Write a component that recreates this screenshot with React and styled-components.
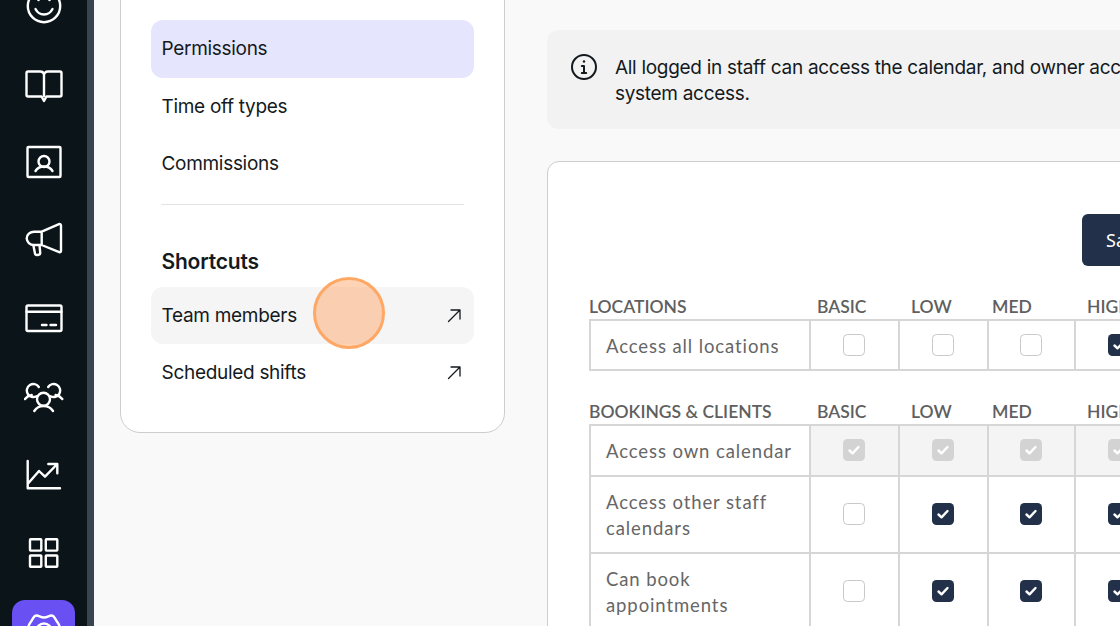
import React from "react";
import styled, { createGlobalStyle } from "styled-components";

const Global = createGlobalStyle`
  html, body { margin: 0; padding: 0; background: #f9f9f9; }
  #root { width: 1120px; height: 626px; overflow: hidden; }
  * { box-sizing: border-box; }
`;

const Page = styled.div`
  position: relative;
  display: flex;
  width: 1120px;
  height: 626px;
  overflow: hidden;
  background: #f9f9f9;
  font-family: Inter, "Liberation Sans", sans-serif;
`;
const Sidebar = styled.nav`
  flex: 0 0 87px;
  display: flex;
  flex-direction: column;
  margin-top: -33px;
  background: #0b1519;
`;
const Rail = styled.div`
  flex: 0 0 7px;
  background: #3a4450;
`;
const NavSlot = styled.div`
  flex: 0 0 78px;
  display: flex;
  align-items: center;
  justify-content: center;
`;
const ActiveNav = styled.div`
  width: 63px;
  height: 60px;
  border-radius: 13px;
  background: #6950f3;
  display: flex;
  align-items: center;
  justify-content: center;
`;
const Content = styled.main`
  flex: 1;
  min-width: 0;
  display: flex;
  align-items: flex-start;
  gap: 42px;
  padding-left: 26px;
`;
const Panel = styled.aside`
  flex: 0 0 385px;
  margin-top: -41px;
  padding: 60px 30px 30px;
  background: #fff;
  border: 1px solid #cdcdcd;
  border-radius: 20px;
  display: flex;
  flex-direction: column;
`;
const MenuItem = styled.div`
  height: 57.5px;
  padding: 0 12.5px 0 10.5px;
  border-radius: 12px;
  display: flex;
  align-items: center;
  justify-content: space-between;
  font-size: 19px;
  letter-spacing: -0.3px;
  color: #14191d;
  background: ${(p) => (p.$state === "active" ? "#e5e6fd" : p.$state === "hover" ? "#f5f5f5" : "transparent")};
`;
const Divider = styled.hr`
  margin: 11px 10px 0;
  border: 0;
  border-top: 1.5px solid #e4e4e4;
`;
const PanelHeading = styled.h3`
  margin: 43px 10.5px 11px;
  font-size: 21px;
  line-height: 28px;
  font-weight: 600;
  letter-spacing: -0.2px;
  color: #14191d;
`;
const Column = styled.section`
  flex: 0 0 760px;
  display: flex;
  flex-direction: column;
  gap: 32px;
  padding-top: 30px;
`;
const Banner = styled.div`
  height: 99px;
  padding: 24px 23px 0;
  border-radius: 12px;
  background: #f2f2f2;
  display: flex;
  gap: 17px;
`;
const BannerIcon = styled.svg`
  flex: none;
  margin-top: -1px;
`;
const BannerText = styled.p`
  margin: 1px 0 0;
  width: 650px;
  font-size: 19px;
  line-height: 26px;
  letter-spacing: -0.3px;
  color: #14191d;
`;
const Card = styled.div`
  padding: 52px 0 0 41px;
  background: #fff;
  border: 1px solid #cdcdcd;
  border-radius: 12px;
  height: 700px;
  display: flex;
  flex-direction: column;
`;
const SaveRow = styled.div`
  display: flex;
  padding-left: 493px;
  margin-bottom: 27px;
`;
const SaveButton = styled.button`
  width: 120px;
  height: 52px;
  border: 0;
  border-radius: 6px;
  background: #223049;
  color: #fff;
  text-align: left;
  padding-left: 24px;
  font-family: "Noto Sans", sans-serif;
  font-size: 18px;
`;
const TableBlock = styled.div`
  margin-bottom: 27px;
`;
const GRID = "222px 89px 88.5px 87.5px 88px";
const HeaderRow = styled.div`
  display: grid;
  grid-template-columns: ${GRID};
  height: 28px;
  line-height: 27px;
  font-family: Lato, sans-serif;
  font-weight: 600;
  font-size: 17.5px;
  color: #5f5f5f;
`;
const HeaderCell = styled.div`
  padding-left: ${(p) => p.$pad}px;
  white-space: nowrap;
`;
const Row = styled.div`
  display: grid;
  grid-template-columns: ${GRID};
  height: ${(p) => p.$h}px;
  margin-top: -2px;
`;
const LabelCell = styled.div`
  border: 2px solid #d6d6d6;
  padding: 1px 8px 0 15px;
  display: flex;
  align-items: center;
  font-family: Lato, sans-serif;
  font-size: 18.5px;
  line-height: 26px;
  letter-spacing: 0.9px;
  color: #666;
`;
const CheckCell = styled.div`
  border: 2px solid #d6d6d6;
  border-left: 0;
  padding-right: 1px;
  display: flex;
  align-items: center;
  justify-content: center;
  background: ${(p) => (p.$disabled ? "#f4f4f4" : "#fff")};
`;
const Box = styled.span`
  width: 22px;
  height: 22px;
  border-radius: 4.5px;
  display: flex;
  align-items: center;
  justify-content: center;
  border: ${(p) => (p.$v === 0 ? "1.5px solid #c9c9c9" : "0")};
  background: ${(p) => (p.$v === 1 ? "#223049" : p.$v === 2 ? "#d3d3d3" : "#fff")};
`;
const Pointer = styled.div`
  position: absolute;
  left: 313px;
  top: 277px;
  width: 72px;
  height: 72px;
  border-radius: 50%;
  background: rgba(255, 170, 110, 0.5);
  border: 3px solid #ffa764;
`;

const Ico = ({ children }) => (
  <svg width="40" height="40" viewBox="0 0 40 40" fill="none" stroke="#fff" strokeWidth="2.4" strokeLinecap="round" strokeLinejoin="round">
    {children}
  </svg>
);
const icons = [
  <Ico key="a"><circle cx="20" cy="20" r="16.2" /><path d="M11.5 23c2 4 5 5.5 8.5 5.5s6.500-1.500 8.500-5.500" /><circle cx="14.500" cy="14" r="1.300" fill="#fff" stroke="none" /><circle cx="25.500" cy="14" r="1.300" fill="#fff" stroke="none" /></Ico>,
  <Ico key="b"><g transform="translate(0 2)"><path d="M20 10v20M20 35l-2.500-4.500H4a1.500 1.500 0 0 1-1.500-1.500V7A1.500 1.500 0 0 1 4 5.500h12c2.500 0 4 1.500 4 4 0-2.500 1.500-4 4-4h12A1.500 1.500 0 0 1 37.500 7v22a1.500 1.500 0 0 1-1.500 1.500H22.500z" /></g></Ico>,
  <Ico key="c"><rect x="3.500" y="5" width="33" height="30" rx="1" /><circle cx="20" cy="19.500" r="5.500" /><path d="M11.500 29c2-3.200 5-4.500 8.500-4.500s6.500 1.300 8.500 4.500" /></Ico>,
  <Ico key="d"><path d="M17.700 11.700 35 4.200c1-.4 2 .2 2 1.300v25.500c0 1-.8 1.600-1.800 1.200L17.700 25H10c-4 0-7.300-3-7.300-6.700s3.300-6.600 7.300-6.600zM17.700 11.700V25M9.300 25 11 33.500c.2 1.200 1 1.700 2.200 1.500l1.500-.3c1.100-.2 1.700-1 1.500-2.100L15.500 25" /></Ico>,
  <Ico key="e"><rect x="2.500" y="7.500" width="35" height="25.500" rx="1.500" /><path d="M2.500 13.700h35M18 27h4.500M26.500 27H32" /></Ico>,
  <Ico key="f"><g transform="translate(0 1)"><circle cx="19.500" cy="22.300" r="6.500" /><path d="M10.300 34c2-3.200 5.200-5 9.200-5s7.500 1.800 9.500 5M12.500 19.200A6.500 6.500 0 1 1 14.800 10M1 22c1.500-2 4-3.500 6.700-4M26.500 19.200A6.500 6.500 0 1 0 24.200 10M38.300 22c-1.500-2-4-3.500-6.700-4" /></g></Ico>,
  <Ico key="g"><g transform="translate(0 1)"><path d="M3.700 6v27.300H36M4.300 28.300 15 16l6 5.700L33.300 9M24.300 9h9v9.300" /></g></Ico>,
  <Ico key="h"><g transform="translate(0 1)"><rect x="6" y="6.300" width="11.300" height="11.300" rx=".6" /><rect x="21.800" y="6.300" width="11.500" height="11.300" rx=".6" /><rect x="6" y="22.500" width="11.300" height="11.300" rx=".6" /><rect x="21.800" y="22.500" width="11.500" height="11.300" rx=".6" /></g></Ico>,
];
const Gear = () => (
  <Ico><circle cx="20" cy="21" r="7.500" /><path d="M12.500 5.500C15 5.500 16.500 7.500 20 7.500S25 5.500 27.500 5.500C29.500 5.500 31 8 32 10 33 12 35.500 14 35.500 17 35.500 20 37 21 37 23 37 25 34 26 33 28 32 30 31 33 29 34 27 35 24 34.500 22 36 20.500 37 19.500 37 18 36 16 34.500 13 35 11 34 9 33 8 30 7 28 6 26 3 25 3 23 3 21 4.500 20 4.500 17 4.500 14 7 12 8 10 9 8 10.500 5.500 12.500 5.500Z" /></Ico>
);
const Arrow = () => (
  <svg width="15" height="15" viewBox="0 0 15 15" fill="none" stroke="#14191d" strokeWidth="1.300" strokeLinecap="round" strokeLinejoin="round">
    <path d="M1.500 13.500 13 2M4 2h9v9" />
  </svg>
);
const Info = () => (
  <BannerIcon width="28" height="28" viewBox="0 0 28 28" fill="none" stroke="#14191d" strokeWidth="2" strokeLinecap="round" strokeLinejoin="round">
    <circle cx="14" cy="14" r="12" />
    <path d="M14 13v7M11.800 13H14M11.800 20h4.400" />
    <circle cx="14" cy="8.500" r="1.200" fill="#14191d" stroke="none" />
  </BannerIcon>
);
const Check = () => (
  <svg width="14" height="14" viewBox="0 0 14 14" fill="none" stroke="#fff" strokeWidth="2.400" strokeLinecap="round" strokeLinejoin="round">
    <path d="M2.500 7.500 5.500 10.300 11.500 4" />
  </svg>
);

const Tick = ({ v }) => <Box $v={v}>{v ? <Check /> : null}</Box>;

const sections = [
  {
    title: "LOCATIONS",
    rows: [{ label: "Access all locations", h: 52, vals: [0, 0, 0, 1] }],
  },
  {
    title: "BOOKINGS & CLIENTS",
    rows: [
      { label: "Access own calendar", h: 52.5, vals: [2, 2, 2, 2], disabled: true },
      { label: "Access other staff calendars", h: 79, vals: [0, 1, 1, 1] },
      { label: "Can book appointments", h: 79, vals: [0, 1, 1, 1] },
    ],
  },
];
const levels = [
  ["BASIC", 6],
  ["LOW", 11],
  ["MED", 3.5],
  ["HIGH", 11],
];

export default function App() {
  return (
    <Page>
      <Global />
      <Sidebar>
        {icons.map((ic, i) => (
          <NavSlot key={i}>{ic}</NavSlot>
        ))}
        <NavSlot>
          <ActiveNav>
            <Gear />
          </ActiveNav>
        </NavSlot>
      </Sidebar>
      <Rail />
      <Content>
        <Panel>
          <MenuItem $state="active">Permissions</MenuItem>
          <MenuItem>Time off types</MenuItem>
          <MenuItem>Commissions</MenuItem>
          <Divider />
          <PanelHeading>Shortcuts</PanelHeading>
          <MenuItem $state="hover">
            Team members
            <Arrow />
          </MenuItem>
          <MenuItem>
            Scheduled shifts
            <Arrow />
          </MenuItem>
        </Panel>
        <Column>
          <Banner>
            <Info />
            <BannerText>
              All logged in staff can access the calendar, and owner accounts have full system access.
            </BannerText>
          </Banner>
          <Card>
            <SaveRow>
              <SaveButton>Save</SaveButton>
            </SaveRow>
            {sections.map((s) => (
              <TableBlock key={s.title}>
                <HeaderRow>
                  <HeaderCell $pad={0}>{s.title}</HeaderCell>
                  {levels.map(([l, pad]) => (
                    <HeaderCell key={l} $pad={pad}>{l}</HeaderCell>
                  ))}
                </HeaderRow>
                {s.rows.map((r) => (
                  <Row key={r.label} $h={r.h}>
                    <LabelCell>{r.label}</LabelCell>
                    {r.vals.map((v, i) => (
                      <CheckCell key={i} $disabled={r.disabled}>
                        <Tick v={v} />
                      </CheckCell>
                    ))}
                  </Row>
                ))}
              </TableBlock>
            ))}
          </Card>
        </Column>
      </Content>
      <Pointer />
    </Page>
  );
}
